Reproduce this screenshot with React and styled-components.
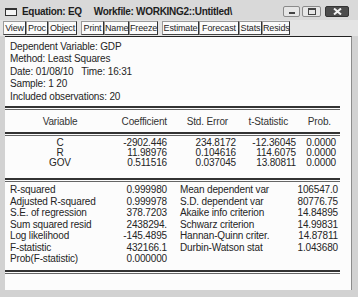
import React from 'react';
import styled, { createGlobalStyle } from 'styled-components';

const Global = createGlobalStyle`
   html, body { margin: 0; padding: 0; background: #d4d4d4; }
   body { font-family: "Liberation Sans", Arial, sans-serif; }
`;

const Window = styled.div`
   width: 358px;
   height: 297px;
   background: #d2d2d2;
   display: flex;
   flex-direction: column;
   overflow: hidden;
   color: #252525;
`;

const TitleBar = styled.div`
   height: 20px;
   box-sizing: border-box;
   padding: 3px 9px 0 5px;
   display: flex;
   align-items: center;
   background: #d9d9d9;
`;

const AppIcon = styled.div`
   width: 12px;
   height: 8px;
   box-sizing: border-box;
   border: 1px solid #333;
   border-top-width: 2px;
   background: #f4f4f4;
   margin-right: 5px;
`;

const Title = styled.span`
   font-size: 10px;
   font-weight: bold;
   letter-spacing: -0.3px;
   white-space: nowrap;
   margin-left: ${(p) => p.gap || 0}px;
   color: #1e1e1e;
`;

const WinButtons = styled.div`
   margin-left: auto;
   display: flex;
   gap: 2px;
`;

const WinBtn = styled.div`
   width: ${(p) => p.w}px;
   height: 11px;
   box-sizing: border-box;
   border: 1px solid ${(p) => (p.dark ? '#333' : '#8a8a8a')};
   border-radius: 2px;
   background: ${(p) => (p.dark ? '#4c4c4c' : '#e6e6e6')};
   display: flex;
   align-items: center;
   justify-content: center;
   margin-left: ${(p) => p.ml || 0}px;
`;

const Dash = styled.div`
   width: 6px;
   height: 2px;
   background: #444;
   margin-top: 3px;
`;

const Square = styled.div`
   width: 6px;
   height: 4px;
   border: 1px solid #444;
   border-top-width: 2px;
`;

const Toolbar = styled.div`
   height: 16px;
   display: flex;
   align-items: center;
   gap: 4px;
   padding-left: 3px;
   background: #e4e4e4;
`;

const ToolGroup = styled.div`
   display: flex;
`;

const ToolBtn = styled.div`
   width: ${(p) => p.w}px;
   height: 14px;
   box-sizing: border-box;
   border: 1px solid #9a9a9a;
   border-right-color: #333;
   border-bottom-color: #444;
   background: #fbfbfb;
   font-size: 9px;
   letter-spacing: -0.15px;
   line-height: 12px;
   text-align: center;
   white-space: nowrap;
`;

const Panel = styled.div`
   flex: 1;
   margin: 0 6px 7px 5px;
   background: #fcfcfc;
   border-top: 1px solid #222;
   border-right: 1px solid #8c8c8c;
   font-size: 10px;
   letter-spacing: -0.15px;
`;

const Info = styled.div`
   padding: 4px 0 0 5px;
`;

const InfoLine = styled.div`
   line-height: 12.4px;
   white-space: pre;
`;

const Rule = styled.div`
   height: 4px;
   box-sizing: border-box;
   margin: ${(p) => p.mt || 0}px 11px 0 0;
   border-top: 2px solid #333;
   border-bottom: 1px solid #666;
`;

const CoefGrid = styled.div`
   display: grid;
   grid-template-columns: 110px 52px 69px 60px 40px;
   padding: ${(p) => p.pad || '0'};
`;

const HeadCell = styled.div`
   height: 22px;
   line-height: 23px;
   text-align: ${(p) => (p.center ? 'center' : 'right')};
   padding-right: ${(p) => p.pr || 0}px;
   color: #333;
`;

const Cell = styled.div`
   line-height: 10px;
   text-align: ${(p) => (p.center ? 'center' : 'right')};
   white-space: nowrap;
`;

const StatsGrid = styled.div`
   display: grid;
   grid-template-columns: 110px 47px 13px 110px 48px;
   padding: 2px 0 0 5px;
`;

const StatLabel = styled.div`
   line-height: 11.5px;
   white-space: nowrap;
`;

const StatValue = styled.div`
   line-height: 11.5px;
   text-align: right;
   white-space: nowrap;
`;

const Spacer = styled.div``;

const toolGroups = [
   [['View', 23], ['Proc', 22], ['Object', 29]],
   [['Print', 23], ['Name', 25], ['Freeze', 29]],
   [['Estimate', 37], ['Forecast', 40], ['Stats', 23], ['Resids', 28]],
];

const info = [
   'Dependent Variable: GDP',
   'Method: Least Squares',
   'Date: 01/08/10   Time: 16:31',
   'Sample: 1 20',
   'Included observations: 20',
];

const coefs = [
   ['C', '-2902.446', '234.8172', '-12.36045', '0.0000'],
   ['R', '11.98976', '0.104616', '114.6075', '0.0000'],
   ['GOV', '0.511516', '0.037045', '13.80811', '0.0000'],
];

const stats = [
   ['R-squared', '0.999980', 'Mean dependent var', '106547.0'],
   ['Adjusted R-squared', '0.999978', 'S.D. dependent var', '80776.75'],
   ['S.E. of regression', '378.7203', 'Akaike info criterion', '14.84895'],
   ['Sum squared resid', '2438294.', 'Schwarz criterion', '14.99831'],
   ['Log likelihood', '-145.4895', 'Hannan-Quinn criter.', '14.87811'],
   ['F-statistic', '432166.1', 'Durbin-Watson stat', '1.043680'],
   ['Prob(F-statistic)', '0.000000', '', ''],
];

export default function App() {
   return (
      <Window>
         <Global />
         <TitleBar>
            <AppIcon />
            <Title>Equation: EQ</Title>
            <Title gap={12}>Workfile: WORKING2::Untitled\</Title>
            <WinButtons>
               <WinBtn w={17}><Dash /></WinBtn>
               <WinBtn w={19}><Square /></WinBtn>
               <WinBtn w={24} dark ml={2}>
                  <svg width="9" height="7" viewBox="0 0 9 7">
                     <path d="M1 0.5 L8 6.5 M8 0.5 L1 6.5" stroke="#f2f2f2" strokeWidth="2" />
                  </svg>
               </WinBtn>
            </WinButtons>
         </TitleBar>
         <Toolbar>
            {toolGroups.map((g, i) => (
               <ToolGroup key={i}>
                  {g.map(([label, w]) => (
                     <ToolBtn key={label} w={w}>{label}</ToolBtn>
                  ))}
               </ToolGroup>
            ))}
         </Toolbar>
         <Panel>
            <Info>
               {info.map((line) => (
                  <InfoLine key={line}>{line}</InfoLine>
               ))}
            </Info>
            <Rule mt={3} />
            <CoefGrid>
               <HeadCell center>Variable</HeadCell>
               <HeadCell>Coefficient</HeadCell>
               <HeadCell pr={8}>Std. Error</HeadCell>
               <HeadCell pr={8}>t-Statistic</HeadCell>
               <HeadCell pr={5}>Prob.</HeadCell>
            </CoefGrid>
            <Rule />
            <CoefGrid pad="2px 0 10px">
               {coefs.map((row) =>
                  row.map((v, j) => (
                     <Cell key={row[0] + j} center={j === 0}>{v}</Cell>
                  ))
               )}
            </CoefGrid>
            <Rule />
            <StatsGrid>
               {stats.map((row) => (
                  <React.Fragment key={row[0]}>
                     <StatLabel>{row[0]}</StatLabel>
                     <StatValue>{row[1]}</StatValue>
                     <Spacer />
                     <StatLabel>{row[2]}</StatLabel>
                     <StatValue>{row[3]}</StatValue>
                  </React.Fragment>
               ))}
            </StatsGrid>
            <Rule mt={5} />
         </Panel>
      </Window>
   );
}
